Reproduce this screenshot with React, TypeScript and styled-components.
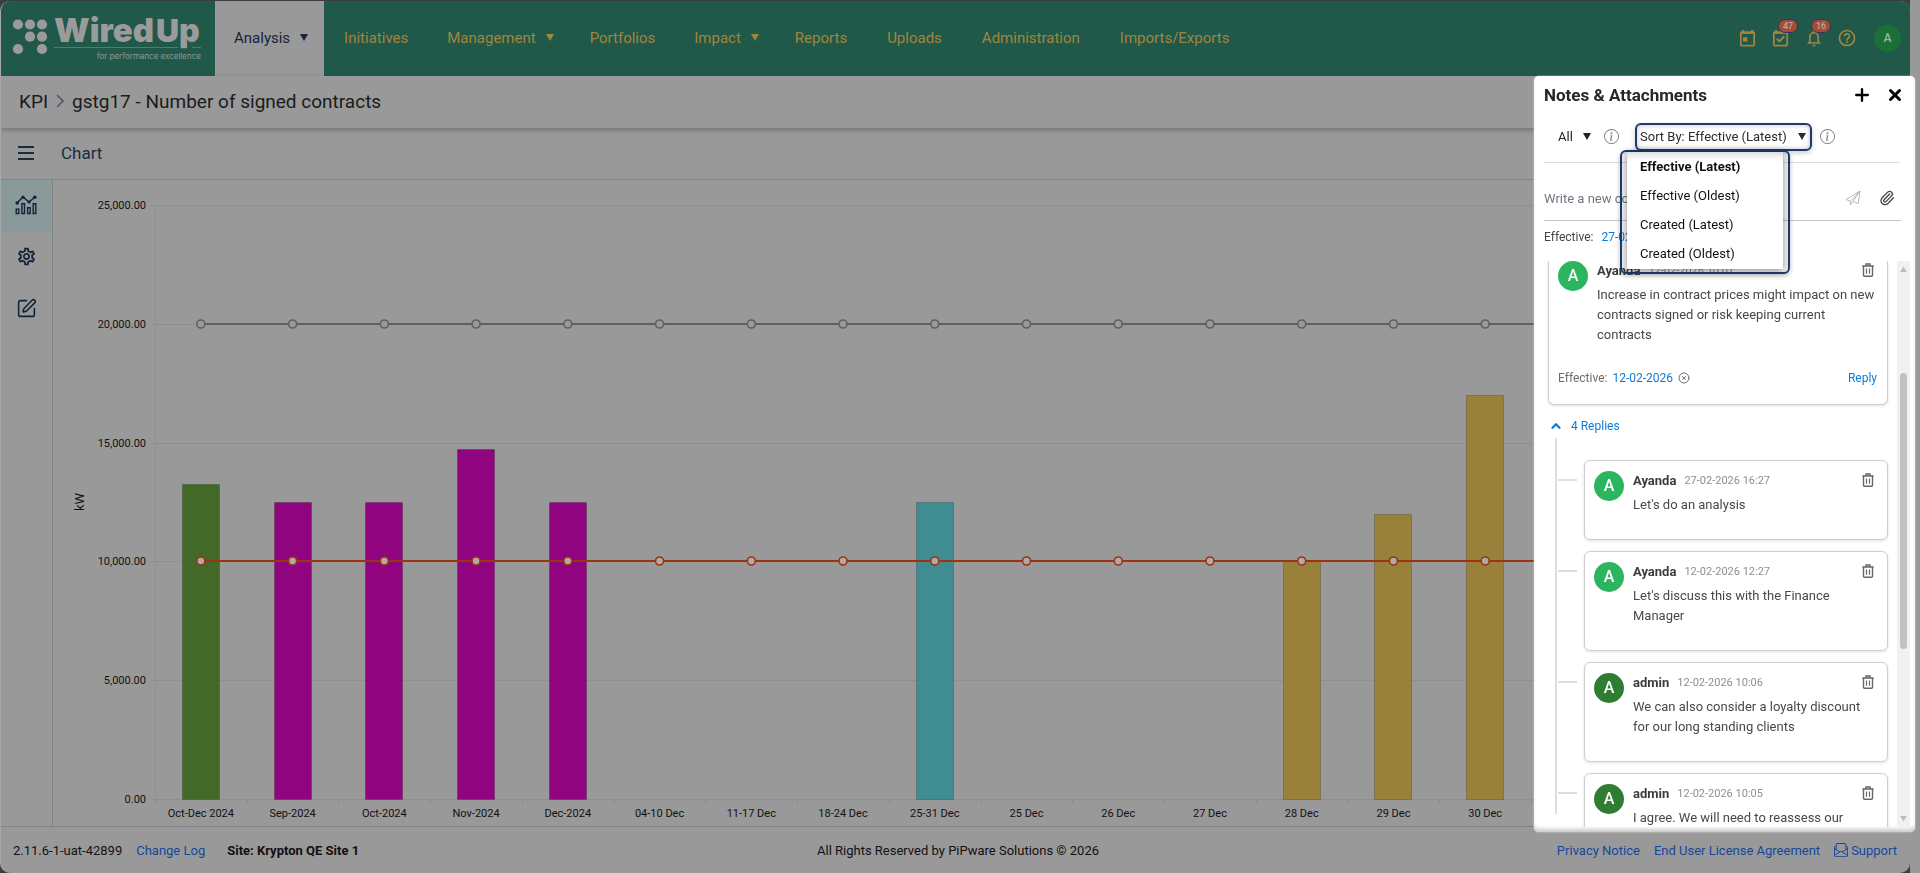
import React, { useEffect, useRef, useState } from 'react';
import styled, { createGlobalStyle, css } from 'styled-components';
import { BsEnvelopePaper, BsInfoCircle } from 'react-icons/bs';
import { MdHelpOutline, MdNotificationsNone, MdOutlineSettings } from 'react-icons/md';
import { ChevronUp, CircleX, Paperclip, Plus, SquarePen, X } from 'lucide-react';

const GlobalStyle = createGlobalStyle`
  *, *::before, *::after { box-sizing: border-box; }
  body {
    margin: 0;
    background: #999999;
    font-family: Roboto, "Liberation Sans", sans-serif;
    font-size: 13px;
    color: #141414;
  }
  button, input, select { font: inherit; color: inherit; }
  button { border: 0; padding: 0; background: none; cursor: pointer; }
  a { text-decoration: none; color: inherit; }
  ul, ol { list-style: none; margin: 0; padding: 0; }
  h1, h2, p { margin: 0; font-weight: 400; }
  svg { display: block; flex: none; }
`;

/* ---------- page frame ---------- */

const Frame = styled.div`
  display: flex;
  min-height: 100vh;
  margin-right: 10px;
  padding-top: 1px;
  background: #3c3d40;
`;

const Page = styled.div`
  flex: 1;
  min-width: 0;
  display: flex;
  flex-direction: column;
  overflow: hidden;
  border-left: 1px solid #a8a8a8;
  border-radius: 10px;
  background: #999999;
`;

/* ---------- header ---------- */

const Header = styled.header`
  display: flex;
  align-items: stretch;
  height: 75px;
  background: #20594a;
`;

const LogoLink = styled.a`
  display: flex;
  width: 214px;
`;

const Nav = styled.nav`
  display: flex;
  flex: 1;
`;

const navItem = css<{ $active?: boolean }>`
  display: flex;
  align-items: center;
  gap: 10px;
  padding: 0 20px 2px;
  font-size: 15px;
  white-space: nowrap;
  color: ${(p) => (p.$active ? '#14233c' : '#a1853d')};
  background: ${(p) => (p.$active ? '#999999' : 'transparent')};
`;

const NavLink = styled.a<{ $active?: boolean }>`
  ${navItem}
`;

const NavMenu = styled.button<{ $active?: boolean }>`
  ${navItem}
  padding: 0 16px 2px 19px;
`;

const HeaderTools = styled.div`
  display: flex;
  align-items: center;
  gap: 13px;
  padding: 0 9px 1px 0;
  color: #a1853d;
`;

const ToolButton = styled.button`
  position: relative;
  display: flex;
  width: 20px;
  height: 20px;
`;

const Badge = styled.span`
  position: absolute;
  left: 7px;
  top: -9px;
  width: 20px;
  height: 14px;
  border: 1px solid #3a3160;
  border-radius: 7px;
  background: #a44c36;
  color: #b9a79f;
  font-size: 9px;
  font-weight: 500;
  line-height: 12px;
  text-align: center;
`;

const UserButton = styled.button`
  width: 27px;
  height: 27px;
  margin-left: 4px;
  border-radius: 50%;
  background: #1b7038;
  color: #a3b0a5;
  font-size: 12px;
  font-weight: 500;
`;

/* ---------- title and toolbar ---------- */

const TitleBar = styled.div`
  position: relative;
  display: flex;
  align-items: center;
  gap: 8px;
  height: 52px;
  padding: 0 18px 2px;
  font-size: 19px;
  color: #1b1b1b;
  box-shadow: 0 2px 5px rgba(0, 0, 0, 0.25);
`;

const PageTitle = styled.h1`
  font-size: 19px;
`;

const Toolbar = styled.div`
  display: flex;
  align-items: center;
  height: 52px;
  padding-bottom: 2px;
  border-bottom: 1px solid #828284;
  color: #1a2b44;
`;

const MenuButton = styled.button`
  display: flex;
  justify-content: center;
  width: 50px;
`;

const SectionTitle = styled.h2`
  padding-left: 10px;
  font-size: 17px;
`;

/* ---------- body ---------- */

const Body = styled.div`
  flex: 1;
  display: flex;
  min-height: 0;
`;

const SideBar = styled.nav`
  width: 52px;
  border-right: 1px solid #828284;
`;

const SideButton = styled.button<{ $active?: boolean }>`
  display: flex;
  align-items: center;
  justify-content: center;
  width: 100%;
  height: 52px;
  padding: 0 1px 3px 0;
  color: #14233c;
  background: ${(p) => (p.$active ? '#8a9a9a' : 'transparent')};
`;

const ChartArea = styled.main`
  flex: 1;
  min-width: 0;
  overflow: hidden;
`;

/* ---------- footer ---------- */

const Footer = styled.footer`
  display: grid;
  grid-template-columns: 1fr auto 1fr;
  align-items: center;
  height: 47px;
  padding: 0 13px 0 12px;
  border-top: 1px solid #828284;
  color: #111111;
`;

const FooterGroup = styled.div<{ $end?: boolean }>`
  display: flex;
  align-items: center;
  gap: 14px;
  justify-content: ${(p) => (p.$end ? 'flex-end' : 'flex-start')};
`;

const Copyright = styled.span`
  padding-left: 6px;
`;

const FooterLink = styled.a`
  display: flex;
  align-items: center;
  gap: 3px;
  color: #16469c;
`;

const SiteName = styled.strong`
  margin-left: 8px;
`;

/* ---------- notes panel ---------- */

const Panel = styled.aside`
  position: fixed;
  top: 76px;
  right: 5px;
  bottom: 41px;
  width: 381px;
  display: flex;
  flex-direction: column;
  padding: 0 5px 5px 10px;
  border-radius: 5px;
  background: #ffffff;
  box-shadow: 0 0 2px rgba(255, 255, 255, 0.7), inset 0 -5px 4px -2px #c9c9c9;
  color: #444444;
`;

const PanelHeader = styled.div`
  display: flex;
  align-items: center;
  height: 38px;
  gap: 14px;
  padding: 0 6px 1px 0;
  color: #000000;
`;

const PanelTitle = styled.h2`
  flex: 1;
  font-size: 17px;
  font-weight: 700;
  color: #24272b;
`;

const Filters = styled.div`
  display: flex;
  align-items: center;
  height: 49px;
  margin-right: 10px;
  padding: 0 0 3px 14px;
  border-bottom: 1px solid #dcdcdc;
  color: #808080;
`;

const FilterField = styled.label`
  display: flex;
  align-items: center;
  color: #222222;
`;

const FilterSelect = styled.select`
  appearance: none;
  width: 25px;
  border: 0;
  padding: 0;
  background: none;
  outline: 0;
`;

const InfoButton = styled.button`
  display: flex;
  margin-left: 13px;
`;

const SortField = styled.div`
  position: relative;
  margin: 0 -5px 0 16px;
`;

const SortButton = styled.button`
  display: flex;
  align-items: center;
  gap: 11px;
  height: 28px;
  padding: 0 4px 0 3px;
  border: 2px solid #1b3c70;
  border-radius: 6px;
  background: #ffffff;
  box-shadow: inset 0 0 5px rgba(0, 0, 0, 0.25), 0 2px 5px rgba(0, 0, 0, 0.2);
  color: #2c2c2c;
  white-space: nowrap;
`;

const SortMenuOutline = styled.div`
  position: absolute;
  z-index: 2;
  top: 27px;
  left: -15px;
  width: 170px;
  padding: 0 5px 3px;
  border: 2px solid #1b3c70;
  border-radius: 6px;
  box-shadow: 0 2px 5px rgba(0, 0, 0, 0.25), inset 0 0 5px rgba(0, 0, 0, 0.15);
`;

const SortMenu = styled.ul`
  padding-bottom: 1px;
  background: #ffffff;
  box-shadow: 0 1px 7px rgba(0, 0, 0, 0.5), inset 0 8px 8px -6px #d0d0d0;
`;

const SortOption = styled.button<{ $selected?: boolean }>`
  width: 100%;
  height: 29px;
  padding-left: 13px;
  text-align: left;
  color: #111111;
  font-weight: ${(p) => (p.$selected ? 700 : 400)};
`;

const Composer = styled.form`
  display: flex;
  align-items: center;
  gap: 18px;
  height: 58px;
  margin-right: 9px;
  padding: 13px 6px 0 0;
  border-bottom: 1px solid #c4c4c4;
`;

const CommentInput = styled.input`
  flex: 1;
  min-width: 0;
  padding: 0;
  border: 0;
  outline: 0;
  background: none;
  &::placeholder { color: #6f777f; opacity: 1; }
`;

const IconButton = styled.button`
  display: flex;
  color: inherit;
`;

const EffectiveRow = styled.div`
  display: flex;
  align-items: center;
  gap: 8px;
  height: 40px;
  padding-bottom: 8px;
  font-size: 12px;
`;

const BlueButton = styled.button`
  color: #0d7ad6;
  font-size: 12px;
`;

const ScrollArea = styled.div`
  flex: 1;
  min-height: 0;
  display: flex;
`;

const Notes = styled.div`
  flex: 1;
  min-width: 0;
  overflow: hidden;
  padding: 0 9px 0 4px;
`;

const ScrollTrack = styled.div`
  display: flex;
  flex-direction: column;
  align-items: center;
  justify-content: space-between;
  width: 13px;
  padding: 5px 0;
  background: #f1f1f1;
  color: #bdbdbd;
`;

const ScrollThumb = styled.div`
  width: 7px;
  height: 276px;
  margin-bottom: 66px;
  border-radius: 4px;
  background: #c1c1c1;
`;

const Card = styled.article<{ $continued?: boolean }>`
  display: flex;
  flex-wrap: wrap;
  gap: 0 9px;
  padding: ${(p) => (p.$continued ? '0 10px 16px 9px' : '10px 10px 24px 9px')};
  border: 1px solid #cfcfcf;
  border-width: ${(p) => (p.$continued ? '0 1px 1px' : '1px')};
  border-radius: ${(p) => (p.$continued ? '0 0 6px 6px' : '6px')};
  box-shadow: 0 1px 3px rgba(0, 0, 0, 0.12);
  background: #ffffff;
`;

const Avatar = styled.span<{ $tone: string }>`
  width: 30px;
  height: 30px;
  border-radius: 50%;
  background: ${(p) => p.$tone};
  color: #ffffff;
  font-size: 16px;
  font-weight: 500;
  line-height: 30px;
  text-align: center;
`;

const NoteContent = styled.div`
  flex: 1;
  min-width: 0;
`;

const NoteHead = styled.div`
  display: flex;
  align-items: center;
  gap: 8px;
  height: 18px;
  margin-bottom: 6px;
  padding-right: 3px;
  color: #666666;
`;

const Author = styled.strong`
  color: #3c3c3c;
`;

const Stamp = styled.time`
  flex: 1;
  font-size: 11px;
  color: #8f8f8f;
`;

const NoteText = styled.p`
  line-height: 20px;
  color: #484848;
`;

const NoteFoot = styled.div`
  display: flex;
  align-items: center;
  gap: 5px;
  width: 100%;
  height: 20px;
  margin-top: 23px;
  font-size: 12px;
  color: #6e6e6e;
`;

const FootSpacer = styled.span`
  flex: 1;
`;

const RepliesToggle = styled.button`
  display: flex;
  align-items: center;
  gap: 8px;
  height: 33px;
  padding: 8px 0 0 1px;
  color: #0d7ad6;
  font-size: 12px;
`;

const Thread = styled.ul`
  display: flex;
  flex-direction: column;
  gap: 11px;
  height: 376px;
  margin-left: 7px;
  padding-top: 22px;
  border-left: 2px solid #dedede;
`;

const Reply = styled.li`
  display: grid;
  grid-template-columns: 20px 1fr;
  gap: 7px;
  &::before {
    content: '';
    height: 2px;
    margin: 19px 0 0 1px;
    background: #dedede;
  }
`;

/* ---------- chart ---------- */

interface Slot {
  label: string;
  value?: number;
  color?: string;
}

const GREEN = '#436929';
const MAGENTA = '#90047f';
const TEAL = '#3f8d92';
const GOLD = '#99813b';

const SLOTS: Slot[] = [
  { label: 'Oct-Dec 2024', value: 13250, color: GREEN },
  { label: 'Sep-2024', value: 12500, color: MAGENTA },
  { label: 'Oct-2024', value: 12500, color: MAGENTA },
  { label: 'Nov-2024', value: 14750, color: MAGENTA },
  { label: 'Dec-2024', value: 12500, color: MAGENTA },
  { label: '04-10 Dec' },
  { label: '11-17 Dec' },
  { label: '18-24 Dec' },
  { label: '25-31 Dec', value: 12500, color: TEAL },
  { label: '25 Dec' },
  { label: '26 Dec' },
  { label: '27 Dec' },
  { label: '28 Dec', value: 10000, color: GOLD },
  { label: '29 Dec', value: 12000, color: GOLD },
  { label: '30 Dec', value: 17000, color: GOLD },
];
const SLOT_COUNT = 19;
const AXIS_MAX = 25000;
const AXIS_STEPS = [0, 5000, 10000, 15000, 20000, 25000];

const ChartSvg = styled.svg`
  position: absolute;
`;

const AxisText = styled.text`
  font-size: 11px;
  fill: #111111;
`;

const AxisTitle = styled.text`
  font-size: 13px;
  fill: #111111;
`;

function KpiChart() {
  const host = useRef<HTMLElement>(null);
  const [size, setSize] = useState({ width: 1857, height: 646 });

  useEffect(() => {
    const node = host.current;
    if (!node) return;
    const observer = new ResizeObserver(() => {
      setSize({ width: node.clientWidth, height: node.clientHeight });
    });
    observer.observe(node);
    return () => observer.disconnect();
  }, []);

  const left = 102;
  const right = size.width - 12;
  const top = 25;
  const bottom = size.height - 27;
  const step = (right - left) / SLOT_COUNT;
  const y = (value: number) => Math.round(bottom - ((bottom - top) * value) / AXIS_MAX);
  const x = (index: number) => left + step * (index + 0.5);
  const format = (value: number) =>
    value.toLocaleString('en-US', { minimumFractionDigits: 2 });

  return (
    <ChartArea ref={host}>
      <ChartSvg width={size.width} height={size.height} role="img" aria-label="KPI chart">
        {AXIS_STEPS.map((value) => (
          <g key={value}>
            <rect x={left - 4} y={y(value)} width={right - left + 4} height={1} fill="#8f8f90" />
            <AxisText x={left - 9} y={y(value) + 4} textAnchor="end">
              {format(value)}
            </AxisText>
          </g>
        ))}
        <rect x={left} y={top} width={1} height={bottom - top} fill="#8f8f90" />
        {Array.from({ length: SLOT_COUNT + 1 }, (_, i) => (
          <rect key={i} x={Math.round(left + step * i)} y={bottom} width={1} height={4} fill="#8a8a8b" />
        ))}
        <AxisTitle transform={`translate(31 ${(top + bottom) / 2}) rotate(-90)`} textAnchor="middle">
          kW
        </AxisTitle>
        {SLOTS.map((slot, i) => (
          <g key={slot.label}>
            {slot.value !== undefined && (
              <rect
                x={Math.round(x(i)) - 18.5}
                y={y(slot.value) + 0.5}
                width={37}
                height={bottom - y(slot.value)}
                fill={slot.color}
                stroke="#000000"
                strokeOpacity={0.18}
              />
            )}
            <AxisText x={x(i)} y={bottom + 18} textAnchor="middle">
              {slot.label}
            </AxisText>
          </g>
        ))}
        {[
          { value: 20000, color: '#606060', fill: '#999999' },
          { value: 10000, color: '#9c3312', fill: '#b0aaa6' },
        ].map((line) => (
          <g key={line.value} stroke={line.color}>
            <line x1={x(0)} x2={x(SLOT_COUNT - 1)} y1={y(line.value)} y2={y(line.value)} strokeWidth={2} />
            {SLOTS.map((slot, i) => (
              <circle key={slot.label} cx={x(i)} cy={y(line.value)} r={4} fill={line.fill} strokeWidth={1.6} />
            ))}
          </g>
        ))}
      </ChartSvg>
    </ChartArea>
  );
}

/* ---------- drawings ---------- */

const Caret = () => (
  <svg width="8" height="7" viewBox="0 0 8 7" aria-hidden="true">
    <path d="M0 0h8L4 7z" fill="currentColor" />
  </svg>
);

const Logo = () => (
  <svg width="214" height="75" viewBox="1 1 214 75" role="img" aria-label="WiredUp for performance excellence">
    <g fill="#9b9b9b">
      {[[18, 24.5], [30, 24.5], [42, 24.5], [30, 36.7], [42, 36.7], [18, 49], [42, 49]].map(([cx, cy]) => (
        <circle key={`${cx}-${cy}`} cx={cx} cy={cy} r="5.1" />
      ))}
      <text x="54" y="42" fontFamily="Inter, sans-serif" fontWeight="900" fontSize="33">
        Wired
      </text>
      <text x="156" y="42" fontFamily="Inter, sans-serif" fontWeight="900" fontSize="32">
        Up
      </text>
      <text x="201" y="59" textAnchor="end" fontFamily="Inter, sans-serif" fontSize="8" fill="#8b9a94">
        for performance excellence
      </text>
    </g>
    <path d="M54 47.5H178M192 47.5H201" stroke="#55796f" />
  </svg>
);

const CalendarIcon = ({ checked = false }: { checked?: boolean }) => (
  <svg width="20" height="20" viewBox="0 0 20 20" fill="none" stroke="currentColor" aria-hidden="true">
    <rect x="2.8" y="4.2" width="13.4" height="13.4" rx="0.8" strokeWidth="1.7" />
    <path d="M2.6 5h13.8M5.1 2v3M14 2v3" strokeWidth="2" />
    {checked ? (
      <path d="M5.8 10.8l2.6 2.6 5-5.2" strokeWidth="2" />
    ) : (
      <rect x="5" y="9.2" width="4.4" height="4.4" fill="currentColor" stroke="none" />
    )}
  </svg>
);

const TrendIcon = () => (
  <svg width="22" height="20" viewBox="0 0 22 20" fill="none" stroke="currentColor" aria-hidden="true">
    <path d="M2 8l6-6 6 5 6-5" strokeWidth="1.4" />
    <g fill="currentColor" stroke="none">
      <circle cx="2.2" cy="8" r="1.8" />
      <circle cx="8" cy="2.2" r="1.6" />
      <circle cx="14" cy="7" r="1.6" />
      <circle cx="19.8" cy="2.2" r="1.8" />
    </g>
    <path d="M1.2 14.2h2.6v4.3H1.2zM6.9 8.7h2.6v9.8H6.9zM12.6 12.7h2.6v5.8h-2.6zM18.2 8.7h2.6v9.8h-2.6z" strokeWidth="1.4" />
  </svg>
);

const BurgerIcon = () => (
  <svg width="16" height="14" viewBox="0 0 16 14" aria-hidden="true">
    <path d="M0 1h16M0 7h16M0 13h16" stroke="currentColor" strokeWidth="1.8" />
  </svg>
);

const CrumbArrow = () => (
  <svg width="8" height="14" viewBox="0 0 8 14" fill="none" aria-hidden="true">
    <path d="M1 1l6 6-6 6" stroke="#4f5969" strokeWidth="1.6" />
  </svg>
);

const SendIcon = () => (
  <svg width="16" height="16" viewBox="0 0 16 16" fill="none" stroke="#b9b9b9" strokeLinejoin="round" aria-hidden="true">
    <path d="M15 1L1 9.5l4.3 1.8L15 1l-1.8 12.5-5.2-2.1L15 1M5.3 11.3V15L8 11.4" />
  </svg>
);

const TrashIcon = () => (
  <svg width="12" height="14" viewBox="0 0 12 14" fill="none" stroke="currentColor" aria-hidden="true">
    <path d="M0.3 3h11.4M4 2.8V1h4v1.8M1.5 3v9.2q0 1 1 1h7q1 0 1-1V3" strokeWidth="1.4" />
    <path d="M4.5 5.5v5.3M7.5 5.5v5.3" strokeWidth="1.2" />
  </svg>
);

const ScrollArrow = ({ down = false }: { down?: boolean }) => (
  <svg width="7" height="6" viewBox="0 0 7 6" aria-hidden="true">
    <path d={down ? 'M0 0h7L3.5 5.5z' : 'M0 6h7L3.5 .5z'} fill="currentColor" />
  </svg>
);

/* ---------- notes ---------- */

const LIGHT_GREEN = '#2cb55f';
const DARK_GREEN = '#2e7d32';

interface NoteData {
  author: string;
  stamp: string;
  text: string;
  tone: string;
}

const NOTE: NoteData = {
  author: 'Ayanda',
  stamp: '12-02-2026 10:01',
  text: 'Increase in contract prices might impact on new contracts signed or risk keeping current contracts',
  tone: LIGHT_GREEN,
};

const REPLIES: NoteData[] = [
  { author: 'Ayanda', stamp: '27-02-2026 16:27', text: "Let's do an analysis", tone: LIGHT_GREEN },
  { author: 'Ayanda', stamp: '12-02-2026 12:27', text: "Let's discuss this with the Finance Manager", tone: LIGHT_GREEN },
  { author: 'admin', stamp: '12-02-2026 10:06', text: 'We can also consider a loyalty discount for our long standing clients', tone: DARK_GREEN },
  { author: 'admin', stamp: '12-02-2026 10:05', text: 'I agree. We will need to reassess our', tone: DARK_GREEN },
];

const SORT_OPTIONS = ['Effective (Latest)', 'Effective (Oldest)', 'Created (Latest)', 'Created (Oldest)'];

function Note({ note, continued, children }: { note: NoteData; continued?: boolean; children?: React.ReactNode }) {
  return (
    <Card $continued={continued}>
      <Avatar $tone={note.tone}>A</Avatar>
      <NoteContent>
        <NoteHead>
          <Author>{note.author}</Author>
          <Stamp>{note.stamp}</Stamp>
          <IconButton aria-label="Delete note">
            <TrashIcon />
          </IconButton>
        </NoteHead>
        <NoteText>{note.text}</NoteText>
      </NoteContent>
      {children}
    </Card>
  );
}

function NotesPanel() {
  const [sort, setSort] = useState(SORT_OPTIONS[0]);
  return (
    <Panel aria-label="Notes & Attachments">
      <PanelHeader>
        <PanelTitle>Notes &amp; Attachments</PanelTitle>
        <IconButton aria-label="Add note">
          <Plus size={20} strokeWidth={2.8} />
        </IconButton>
        <IconButton aria-label="Close">
          <X size={18} strokeWidth={4} />
        </IconButton>
      </PanelHeader>
      <Filters>
        <FilterField>
          <FilterSelect aria-label="Filter notes" defaultValue="All">
            <option>All</option>
          </FilterSelect>
          <Caret />
        </FilterField>
        <InfoButton aria-label="About filters">
          <BsInfoCircle size={15} />
        </InfoButton>
        <SortField>
          <SortButton aria-haspopup="listbox" aria-expanded="true">
            Sort By: {sort}
            <Caret />
          </SortButton>
          <SortMenuOutline>
            <SortMenu>
              {SORT_OPTIONS.map((option) => (
                <li key={option}>
                  <SortOption $selected={option === sort} onClick={() => setSort(option)}>
                    {option}
                  </SortOption>
                </li>
              ))}
            </SortMenu>
          </SortMenuOutline>
        </SortField>
        <InfoButton aria-label="About sorting">
          <BsInfoCircle size={15} />
        </InfoButton>
      </Filters>
      <Composer onSubmit={(event) => event.preventDefault()}>
        <CommentInput aria-label="Comment" placeholder="Write a new comment" />
        <IconButton aria-label="Send">
          <SendIcon />
        </IconButton>
        <IconButton type="button" aria-label="Attach a file">
          <Paperclip size={16} strokeWidth={2} />
        </IconButton>
      </Composer>
      <EffectiveRow>
        Effective: <BlueButton>27-02-2026</BlueButton>
      </EffectiveRow>
      <ScrollArea>
        <Notes>
          <Note note={NOTE} continued>
            <NoteFoot>
              Effective: <BlueButton>12-02-2026</BlueButton>
              <IconButton aria-label="Clear date">
                <CircleX size={12} />
              </IconButton>
              <FootSpacer />
              <BlueButton>Reply</BlueButton>
            </NoteFoot>
          </Note>
          <RepliesToggle aria-expanded="true">
            <ChevronUp size={14} strokeWidth={4} />
            4 Replies
          </RepliesToggle>
          <Thread>
            {REPLIES.map((reply) => (
              <Reply key={reply.stamp}>
                <Note note={reply} />
              </Reply>
            ))}
          </Thread>
        </Notes>
        <ScrollTrack>
          <ScrollArrow />
          <ScrollThumb />
          <ScrollArrow down />
        </ScrollTrack>
      </ScrollArea>
    </Panel>
  );
}

export default function App() {
  return (
    <>
      <GlobalStyle />
      <Frame>
        <Page>
          <Header>
            <LogoLink href="#home">
              <Logo />
            </LogoLink>
            <Nav>
              <NavMenu $active>
                Analysis <Caret />
              </NavMenu>
              <NavLink href="#initiatives">Initiatives</NavLink>
              <NavMenu>
                Management <Caret />
              </NavMenu>
              <NavLink href="#portfolios">Portfolios</NavLink>
              <NavMenu>
                Impact <Caret />
              </NavMenu>
              <NavLink href="#reports">Reports</NavLink>
              <NavLink href="#uploads">Uploads</NavLink>
              <NavLink href="#administration">Administration</NavLink>
              <NavLink href="#imports">Imports/Exports</NavLink>
            </Nav>
            <HeaderTools>
              <ToolButton aria-label="Calendar">
                <CalendarIcon />
              </ToolButton>
              <ToolButton aria-label="Tasks">
                <CalendarIcon checked />
                <Badge>47</Badge>
              </ToolButton>
              <ToolButton aria-label="Notifications">
                <MdNotificationsNone size={20} />
                <Badge>16</Badge>
              </ToolButton>
              <ToolButton aria-label="Help">
                <MdHelpOutline size={20} />
              </ToolButton>
              <UserButton>A</UserButton>
            </HeaderTools>
          </Header>
          <TitleBar>
            <a href="#kpi">KPI</a>
            <CrumbArrow />
            <PageTitle>gstg17 - Number of signed contracts</PageTitle>
          </TitleBar>
          <Toolbar>
            <MenuButton aria-label="Toggle menu">
              <BurgerIcon />
            </MenuButton>
            <SectionTitle>Chart</SectionTitle>
          </Toolbar>
          <Body>
            <SideBar aria-label="Views">
              <SideButton $active aria-label="Chart">
                <TrendIcon />
              </SideButton>
              <SideButton aria-label="Settings">
                <MdOutlineSettings size={21} />
              </SideButton>
              <SideButton aria-label="Edit">
                <SquarePen size={21} strokeWidth={1.8} />
              </SideButton>
            </SideBar>
            <KpiChart />
          </Body>
          <Footer>
            <FooterGroup>
              <span>2.11.6-1-uat-42899</span>
              <FooterLink href="#changes">Change Log</FooterLink>
              <SiteName>Site: Krypton QE Site 1</SiteName>
            </FooterGroup>
            <Copyright>All Rights Reserved by PiPware Solutions © 2026</Copyright>
            <FooterGroup $end>
              <FooterLink href="#privacy">Privacy Notice</FooterLink>
              <FooterLink href="#licence">End User License Agreement</FooterLink>
              <FooterLink href="#support">
                <BsEnvelopePaper size={14} />
                Support
              </FooterLink>
            </FooterGroup>
          </Footer>
        </Page>
      </Frame>
      <NotesPanel />
    </>
  );
}
